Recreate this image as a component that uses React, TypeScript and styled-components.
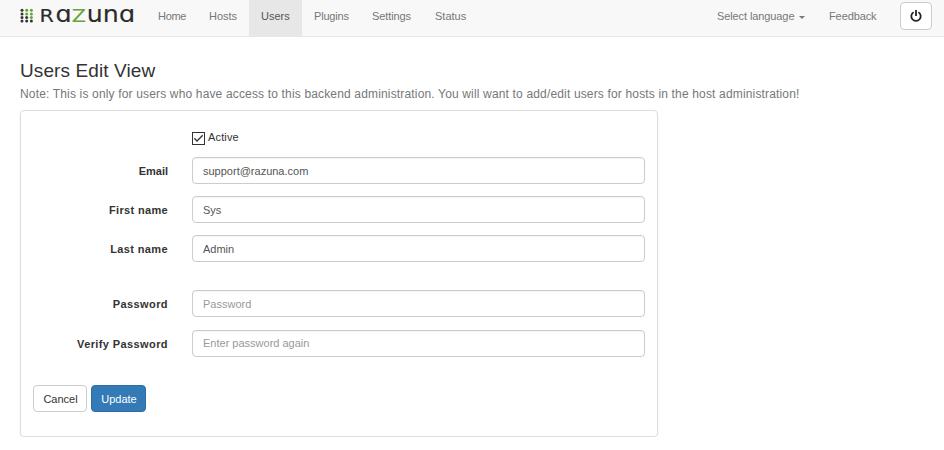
import React from "react";
import styled, { createGlobalStyle } from "styled-components";

const GlobalStyle = createGlobalStyle`
  * { box-sizing: border-box; }
  body { margin: 0; background: #fff; color: #333; font: 11px/16px "Liberation Sans", Arial, sans-serif; }
  input, button { font-family: inherit; font-size: 11px; }
`;

const Navbar = styled.header`
  display: flex;
  height: 37px;
  background: #f8f8f8;
  border-bottom: 1px solid #e7e7e7;
`;
const Brand = styled.div`
  width: 146px;
  padding-left: 20px;
  svg { display: block; }
`;
const Menu = styled.nav`
  display: flex;
  flex: 1;
`;
const MenuItem = styled.a<{ $width: number; $active?: boolean; $spacing?: number }>`
  width: ${(p) => p.$width}px;
  padding: 8px 0 0 12px;
  white-space: nowrap;
  letter-spacing: ${(p) => p.$spacing ?? 0}px;
  color: ${(p) => (p.$active ? "#555" : "#777")};
  background: ${(p) => (p.$active ? "#e7e7e7" : "transparent")};
`;
const Caret = styled.span`
  display: inline-block;
  margin-left: 5px;
  vertical-align: middle;
  border-top: 3px solid #777;
  border-left: 3px solid transparent;
  border-right: 3px solid transparent;
`;
const PowerButton = styled.button`
  width: 32px;
  height: 28px;
  margin: 2px 12px 0 0;
  padding: 0 0 1px;
  display: flex;
  align-items: center;
  justify-content: center;
  background: #fff;
  border: 1px solid #ccc;
  border-radius: 4px;
`;
const Page = styled.main`
  padding: 23px 0 0 20px;
`;
const Title = styled.h1`
  margin: 0;
  font-size: 19px;
  line-height: 22px;
  font-weight: 400;
  letter-spacing: 0.1px;
`;
const Note = styled.p`
  margin: 4px 0 7px;
  font-size: 12px;
  line-height: 17px;
  color: #777;
  white-space: nowrap;
  letter-spacing: 0.16px;
`;
const Card = styled.form`
  width: 638px;
  height: 327px;
  padding: 20px 12px 0;
  border: 1px solid #ddd;
  border-radius: 4px;
  box-shadow: 0 1px 2px rgba(0, 0, 0, 0.08);
`;
const CheckRow = styled.label`
  display: flex;
  height: 14px;
  margin: 0 0 12px 159px;
  gap: 3px;
  line-height: 12px;
  letter-spacing: 0.15px;
`;
const CheckIcon = styled.svg`
  margin-top: 1px;
`;
const Fields = styled.div<{ $top?: number }>`
  display: grid;
  row-gap: 12.2px;
  margin-top: ${(p) => p.$top ?? 0}px;
`;
const Field = styled.label`
  display: grid;
  grid-template-columns: 135px 453px;
  column-gap: 24px;
  height: 27px;
`;
const Label = styled.span<{ $spacing: number }>`
  line-height: 28px;
  font-weight: 700;
  text-align: right;
  letter-spacing: ${(p) => p.$spacing}px;
`;
const Input = styled.input`
  width: 453px;
  height: 27px;
  padding: 0 10px;
  color: #555;
  background: #fff;
  border: 1px solid #ccc;
  border-radius: 4px;
  box-shadow: inset 0 1px 1px rgba(0, 0, 0, 0.04);
  &::placeholder { color: #999; opacity: 1; }
`;
const Actions = styled.div`
  display: flex;
  gap: 4px;
  margin-top: 28px;
`;
const Button = styled.button<{ $primary?: boolean; $width: number }>`
  width: ${(p) => p.$width}px;
  height: 27px;
  padding: 2px 0 0 1px;
  color: ${(p) => (p.$primary ? "#fff" : "#333")};
  background: ${(p) => (p.$primary ? "#337ab7" : "#fff")};
  border: 1px solid ${(p) => (p.$primary ? "#2e6da4" : "#ccc")};
  border-radius: 4px;
`;

const dots = [0, 1, 2].flatMap((col) => [0, 1, 2, 3].map((row) => ({ col, row })));

const letters = [
  { char: "R", x: 19.4, size: 18, width: 14.4 },
  { char: "ɑ", x: 35.6, size: 23, width: 16.2 },
  { char: "Z", x: 51.8, size: 18, width: 14.2, color: "#64a534" },
  { char: "u", x: 66.8, size: 23, width: 16 },
  { char: "n", x: 82.8, size: 23, width: 16 },
  { char: "ɑ", x: 99, size: 23, width: 16.2 },
];

function Logo() {
  return (
    <svg width="118" height="30" role="img" aria-label="Razuna">
      {dots.map(({ col, row }) => (
        <circle
          key={`${col}-${row}`}
          cx={2 + col * 4.7}
          cy={10.3 + row * 3.6}
          r="1.5"
          fill={col > 0 && row < 3 && !(col === 1 && row === 2) ? "#64a534" : "#333"}
        />
      ))}
      <g fontFamily="DejaVu Sans, sans-serif" strokeWidth="0.15">
        {letters.map((l) => (
          <text
            key={l.x}
            x={l.x}
            y="22"
            fontSize={l.size}
            textLength={l.width}
            lengthAdjust="spacingAndGlyphs"
            fill={l.color ?? "#2b2b2b"}
            stroke={l.color ?? "#2b2b2b"}
          >
            {l.char}
          </text>
        ))}
      </g>
    </svg>
  );
}

const menu = [
  { text: "Home", width: 51, spacing: -0.3 },
  { text: "Hosts", width: 52 },
  { text: "Users", width: 53, active: true },
  { text: "Plugins", width: 58, spacing: -0.2 },
  { text: "Settings", width: 63, spacing: -0.1 },
  { text: "Status", width: 55 },
];
const profile = [
  { label: "Email", spacing: 0, value: "support@razuna.com" },
  { label: "First name", spacing: 0.33, value: "Sys" },
  { label: "Last name", spacing: 0.38, value: "Admin" },
];
const passwords = [
  { label: "Password", spacing: 0.42, hint: "Password" },
  { label: "Verify Password", spacing: 0.4, hint: "Enter password again" },
];

export default function App() {
  return (
    <>
      <GlobalStyle />
      <Navbar>
        <Brand><Logo /></Brand>
        <Menu>
          {menu.map((m) => (
            <MenuItem key={m.text} $width={m.width} $active={m.active} $spacing={m.spacing}>{m.text}</MenuItem>
          ))}
        </Menu>
        <MenuItem $width={112} $spacing={-0.1}>Select language<Caret /></MenuItem>
        <MenuItem $width={83} $spacing={-0.1}>Feedback</MenuItem>
        <PowerButton type="button" aria-label="Log out">
          <svg width="12" height="12" viewBox="0 0 12 12" fill="none" stroke="#222" strokeWidth="1.8">
            <path d="M3.6 2.2A4.7 4.7 0 1 0 8.4 2.2M6 0V6" />
          </svg>
        </PowerButton>
      </Navbar>
      <Page>
        <Title>Users Edit View</Title>
        <Note>
          Note: This is only for users who have access to this backend administration. You will want to add/edit users for hosts in the host administration!
        </Note>
        <Card>
          <CheckRow>
            <CheckIcon width="13" height="13" fill="none" stroke="#333">
              <rect x="0.5" y="0.5" width="12" height="12" />
              <path d="M2.3 6.3L5 9L10.7 3.3" strokeWidth="1.3" />
            </CheckIcon>
            Active
          </CheckRow>
          <Fields>
            {profile.map((f) => (
              <Field key={f.label}>
                <Label $spacing={f.spacing}>{f.label}</Label>
                <Input defaultValue={f.value} />
              </Field>
            ))}
          </Fields>
          <Fields $top={28}>
            {passwords.map((f) => (
              <Field key={f.label}>
                <Label $spacing={f.spacing}>{f.label}</Label>
                <Input placeholder={f.hint} />
              </Field>
            ))}
          </Fields>
          <Actions>
            <Button type="button" $width={54}>Cancel</Button>
            <Button type="button" $width={55} $primary>Update</Button>
          </Actions>
        </Card>
      </Page>
    </>
  );
}
